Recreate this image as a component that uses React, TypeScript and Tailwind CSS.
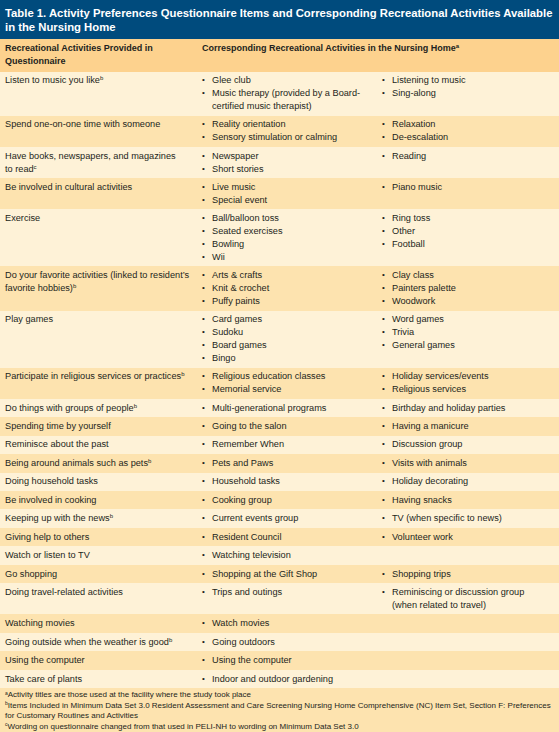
import React from "react"

type Row = {
  q: React.ReactNode
  sup?: string
  a: React.ReactNode[]
  b: React.ReactNode[]
}

const rows: Row[] = [
  {
    q: "Listen to music you like",
    sup: "b",
    a: ["Glee club", <>Music therapy (provided by a Board-<br />certified music therapist)</>],
    b: ["Listening to music", "Sing-along"],
  },
  {
    q: "Spend one-on-one time with someone",
    a: ["Reality orientation", "Sensory stimulation or calming"],
    b: ["Relaxation", "De-escalation"],
  },
  {
    q: <>Have books, newspapers, and magazines<br />to read</>,
    sup: "c",
    a: ["Newspaper", "Short stories"],
    b: ["Reading"],
  },
  {
    q: "Be involved in cultural activities",
    a: ["Live music", "Special event"],
    b: ["Piano music"],
  },
  {
    q: "Exercise",
    a: ["Ball/balloon toss", "Seated exercises", "Bowling", "Wii"],
    b: ["Ring toss", "Other", "Football"],
  },
  {
    q: <>Do your favorite activities (linked to resident’s<br />favorite hobbies)</>,
    sup: "b",
    a: ["Arts & crafts", "Knit & crochet", "Puffy paints"],
    b: ["Clay class", "Painters palette", "Woodwork"],
  },
  {
    q: "Play games",
    a: ["Card games", "Sudoku", "Board games", "Bingo"],
    b: ["Word games", "Trivia", "General games"],
  },
  {
    q: "Participate in religious services or practices",
    sup: "b",
    a: ["Religious education classes", "Memorial service"],
    b: ["Holiday services/events", "Religious services"],
  },
  {
    q: "Do things with groups of people",
    sup: "b",
    a: ["Multi-generational programs"],
    b: ["Birthday and holiday parties"],
  },
  { q: "Spending time by yourself", a: ["Going to the salon"], b: ["Having a manicure"] },
  { q: "Reminisce about the past", a: ["Remember When"], b: ["Discussion group"] },
  { q: "Being around animals such as pets", sup: "b", a: ["Pets and Paws"], b: ["Visits with animals"] },
  { q: "Doing household tasks", a: ["Household tasks"], b: ["Holiday decorating"] },
  { q: "Be involved in cooking", a: ["Cooking group"], b: ["Having snacks"] },
  { q: "Keeping up with the news", sup: "b", a: ["Current events group"], b: ["TV (when specific to news)"] },
  { q: "Giving help to others", a: ["Resident Council"], b: ["Volunteer work"] },
  { q: "Watch or listen to TV", a: ["Watching television"], b: [] },
  { q: "Go shopping", a: ["Shopping at the Gift Shop"], b: ["Shopping trips"] },
  {
    q: "Doing travel-related activities",
    a: ["Trips and outings"],
    b: [<>Reminiscing or discussion group<br />(when related to travel)</>],
  },
  { q: "Watching movies", a: ["Watch movies"], b: [] },
  { q: "Going outside when the weather is good", sup: "b", a: ["Going outdoors"], b: [] },
  { q: "Using the computer", a: ["Using the computer"], b: [] },
  { q: "Take care of plants", a: ["Indoor and outdoor gardening"], b: [] },
]

function Bullets({ items }: { items: React.ReactNode[] }) {
  return (
    <ul>
      {items.map((it, i) => (
        <li key={i} className="flex">
          <span className="w-[10px] shrink-0 text-[8px]">•</span>
          <span>{it}</span>
        </li>
      ))}
    </ul>
  )
}

export default function App() {
  return (
    <div
      className="w-[559px] bg-[#fef2d7] text-[#231f20]"
      style={{ fontFamily: '"Liberation Sans", Arial, sans-serif' }}
    >
      <div className="whitespace-nowrap bg-[#004b7d] px-[5px] pb-[4.5px] pt-[7px] text-[11.3px] font-bold leading-[13.7px] text-white">
        Table 1. Activity Preferences Questionnaire Items and Corresponding Recreational Activities Available
        <br />
        in the Nursing Home
      </div>

      <div className="grid grid-cols-[197px_1fr] bg-[#fdd28e] py-[3px] text-[9px] font-bold leading-[13.3px]">
        <div className="pl-[5px]">
          Recreational Activities Provided in
          <br />
          Questionnaire
        </div>
        <div className="pl-[5px]">
          Corresponding Recreational Activities in the Nursing Home<sup className="text-[6px]">a</sup>
        </div>
      </div>

      {rows.map((r, i) => (
        <div
          key={i}
          className={`grid grid-cols-[197px_180px_1fr] py-[2.8px] text-[9.2px] leading-[12.85px] ${
            i % 2 === 0 ? "bg-[#fef2d7]" : "bg-[#fde3af]"
          }`}
        >
          <div className="pl-[5px] pr-[2px]">
            {r.q}
            {r.sup && <sup className="text-[6px]">{r.sup}</sup>}
          </div>
          <div className="pl-[5px]">
            <Bullets items={r.a} />
          </div>
          <div className="pl-[5px] pr-[10px]">
            <Bullets items={r.b} />
          </div>
        </div>
      ))}

      <div className="whitespace-nowrap bg-[#fde3af] px-[5px] pb-[2px] pt-[2px] text-[8px] leading-[10.5px]">
        <div>
          <sup className="text-[5px]">a</sup>Activity titles are those used at the facility where the study took place
        </div>
        <div>
          <sup className="text-[5px]">b</sup>Items Included in Minimum Data Set 3.0 Resident Assessment and Care Screening Nursing Home
          Comprehensive (NC) Item Set, Section F: Preferences
          <br />
          for Customary Routines and Activities
        </div>
        <div>
          <sup className="text-[5px]">c</sup>Wording on questionnaire changed from that used in PELI-NH to wording on Minimum Data Set 3.0
        </div>
      </div>
    </div>
  )
}
